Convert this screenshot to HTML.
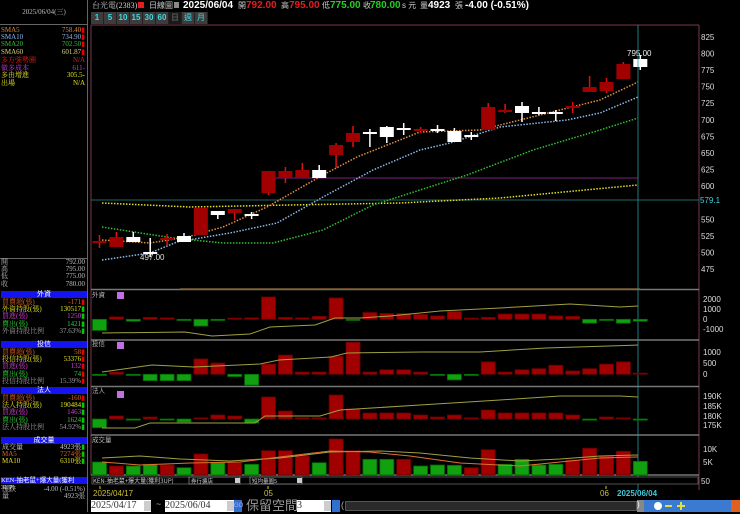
<!DOCTYPE html>
<html><head><meta charset="utf-8">
<style>
*{margin:0;padding:0;box-sizing:border-box}
body{width:740px;height:512px;background:#000;overflow:hidden;position:relative;font-family:"Liberation Sans","Noto Sans CJK TC",sans-serif;}
.l{position:absolute;font-size:7px;line-height:7px;white-space:nowrap;font-family:"Liberation Serif","Noto Serif CJK SC",serif}
.r{position:absolute;font-size:7px;line-height:7px;white-space:nowrap;text-align:right;right:655px;font-family:"Liberation Serif","Noto Serif CJK SC",serif}
.bar{position:absolute;left:1px;width:86px;height:7px;background:#1414f0;color:#fff;font-size:7px;line-height:7px;text-align:center;font-family:"Liberation Serif","Noto Sans CJK TC",serif}
.hd{position:absolute;top:0;font-size:9px;line-height:11px;white-space:nowrap;color:#ccc}
.b{font-weight:bold;font-size:10px}
.btn{position:absolute;top:12px;height:12px;width:13px;background:#3c3c3c;color:#40d8e0;font-size:8px;line-height:12px;text-align:center;font-weight:bold;border-right:1px solid #222}
</style></head><body>
<div style="position:absolute;left:0;top:0;width:88px;height:512px;border-right:1px solid #666"></div>
<div style="position:absolute;left:0;top:0;width:88px;height:25px;border-bottom:1px solid #666;color:#bbb;font-size:7px;text-align:center;line-height:25px;font-family:'Liberation Serif','Noto Serif CJK SC',serif">2025/06/04(三)</div>
<div class="l" style="left:1px;top:27px;color:#d88a3c">SMA5</div><div class="r" style="top:27px;color:#d88a3c">758.40<span style="color:#e00">▮</span></div>
<div class="l" style="left:1px;top:34px;color:#8ab8e8">SMA10</div><div class="r" style="top:34px;color:#8ab8e8">734.90<span style="color:#e00">▮</span></div>
<div class="l" style="left:1px;top:41px;color:#30c030">SMA20</div><div class="r" style="top:41px;color:#30c030">702.50<span style="color:#e00">▮</span></div>
<div class="l" style="left:1px;top:49px;color:#d8d080">SMA60</div><div class="r" style="top:49px;color:#d8d080">601.87<span style="color:#e00">▮</span></div>
<div class="l" style="left:1px;top:57px;color:#e02020">多方強勢圈</div><div class="r" style="top:57px;color:#e02020">N/A</div>
<div class="l" style="left:1px;top:65px;color:#c040d0">做多成本</div><div class="r" style="top:65px;color:#c040d0">611-</div>
<div class="l" style="left:1px;top:72px;color:#e0e020">多由增進</div><div class="r" style="top:72px;color:#e0e020">305.5-</div>
<div class="l" style="left:1px;top:80px;color:#e0e020">出場</div><div class="r" style="top:80px;color:#e0e020">N/A</div>
<div style="position:absolute;left:0;top:258px;width:88px;border-top:1px solid #666"></div>
<div class="l" style="left:1px;top:259px;color:#bbb">開</div><div class="r" style="top:259px;color:#bbb">792.00</div>
<div class="l" style="left:1px;top:266px;color:#bbb">高</div><div class="r" style="top:266px;color:#bbb">795.00</div>
<div class="l" style="left:1px;top:273px;color:#bbb">低</div><div class="r" style="top:273px;color:#bbb">775.00</div>
<div class="l" style="left:1px;top:281px;color:#bbb">收</div><div class="r" style="top:281px;color:#bbb">780.00</div>

<div class="bar" style="top:291px">外資</div>
<div class="l" style="left:2px;top:299px;color:#e06020">買賣超(張)</div><div class="r" style="top:299px;color:#e06020">-171<span style="color:#e00">▮</span></div>
<div class="l" style="left:2px;top:306px;color:#e0e020">外資持股(張)</div><div class="r" style="top:306px;color:#e0e020">130517<span style="color:#0c0">▮</span></div>
<div class="l" style="left:2px;top:313px;color:#d040d0">買進(張)</div><div class="r" style="top:313px;color:#d040d0">1250<span style="color:#0c0">▮</span></div>
<div class="l" style="left:2px;top:321px;color:#30d030">賣出(張)</div><div class="r" style="top:321px;color:#30d030">1421<span style="color:#0c0">▮</span></div>
<div class="l" style="left:2px;top:328px;color:#999">外資持股比例</div><div class="r" style="top:328px;color:#999">37.63%<span style="color:#0c0">▮</span></div>

<div class="bar" style="top:341px">投信</div>
<div class="l" style="left:2px;top:349px;color:#e06020">買賣超(張)</div><div class="r" style="top:349px;color:#e06020">58<span style="color:#e00">▮</span></div>
<div class="l" style="left:2px;top:356px;color:#e0e020">投信持股(張)</div><div class="r" style="top:356px;color:#e0e020">53376<span style="color:#e00">▮</span></div>
<div class="l" style="left:2px;top:363px;color:#d040d0">買進(張)</div><div class="r" style="top:363px;color:#d040d0">132<span style="color:#e00">▮</span></div>
<div class="l" style="left:2px;top:371px;color:#30d030">賣出(張)</div><div class="r" style="top:371px;color:#30d030">74<span style="color:#e00">▮</span></div>
<div class="l" style="left:2px;top:378px;color:#999">投信持股比例</div><div class="r" style="top:378px;color:#999">15.39%<span style="color:#e00">▮</span></div>

<div class="bar" style="top:387px">法人</div>
<div class="l" style="left:2px;top:395px;color:#e06020">買賣超(張)</div><div class="r" style="top:395px;color:#e06020">-160<span style="color:#e00">▮</span></div>
<div class="l" style="left:2px;top:402px;color:#e0e020">法人持股(張)</div><div class="r" style="top:402px;color:#e0e020">190484<span style="color:#0c0">▮</span></div>
<div class="l" style="left:2px;top:409px;color:#d040d0">買進(張)</div><div class="r" style="top:409px;color:#d040d0">1463<span style="color:#0c0">▮</span></div>
<div class="l" style="left:2px;top:417px;color:#30d030">賣出(張)</div><div class="r" style="top:417px;color:#30d030">1624<span style="color:#0c0">▮</span></div>
<div class="l" style="left:2px;top:424px;color:#999">法人持股比例</div><div class="r" style="top:424px;color:#999">54.92%<span style="color:#0c0">▮</span></div>

<div class="bar" style="top:437px">成交量</div>
<div class="l" style="left:2px;top:444px;color:#ccc">成交量</div><div class="r" style="top:444px;color:#ccc">4923張<span style="color:#0c0">▮</span></div>
<div class="l" style="left:2px;top:451px;color:#e06020">MA5</div><div class="r" style="top:451px;color:#e06020">7274張<span style="color:#0c0">▮</span></div>
<div class="l" style="left:2px;top:458px;color:#e0e020">MA10</div><div class="r" style="top:458px;color:#e0e020">6310張<span style="color:#0c0">▮</span></div>

<div class="bar" style="top:477px;text-align:left;font-size:6.5px">KEN-抽老鼠+爆大量(獲利3UP)</div>
<div class="l" style="left:2px;top:486px;color:#bbb">漲跌</div><div class="r" style="top:486px;color:#bbb">-4.00 (-0.51%)</div>
<div class="l" style="left:2px;top:493px;color:#bbb">量</div><div class="r" style="top:493px;color:#bbb">4923張</div>

<!-- header -->
<div class="hd" style="left:92px;font-family:'Liberation Serif','Noto Serif CJK SC',serif;font-size:8px">台光電(2383)</div>
<div style="position:absolute;left:138px;top:2px;width:6px;height:6px;background:#e02020"></div>
<div class="hd" style="left:149px;font-size:8px">日線圖</div>
<div style="position:absolute;left:174px;top:2px;width:5px;height:6px;background:#888"></div>
<div class="hd b" style="left:183px;color:#fff">2025/06/04</div>
<div class="hd" style="left:238px;font-size:8px">開</div><div class="hd b" style="left:246px;color:#e02020">792.00</div>
<div class="hd" style="left:281px;font-size:8px">高</div><div class="hd b" style="left:289px;color:#e02020">795.00</div>
<div class="hd" style="left:322px;font-size:8px">低</div><div class="hd b" style="left:330px;color:#20d020">775.00</div>
<div class="hd" style="left:363px;font-size:8px">收</div><div class="hd b" style="left:370px;color:#20d020">780.00</div>
<div class="hd" style="left:402px;font-size:8px">s 元</div>
<div class="hd" style="left:420px;font-size:8px">量</div><div class="hd b" style="left:428px;color:#fff">4923</div>
<div class="hd" style="left:455px;font-size:8px">張</div><div class="hd b" style="left:465px;color:#fff">-4.00 (-0.51%)</div>
<div class="btn" style="left:91px">1</div><div class="btn" style="left:104px">5</div><div class="btn" style="left:117px">10</div><div class="btn" style="left:130px">15</div><div class="btn" style="left:143px">30</div><div class="btn" style="left:156px">60</div>
<div class="btn" style="left:169px;background:#1a1a1a;color:#555">日</div><div class="btn" style="left:182px;font-weight:normal">週</div><div class="btn" style="left:195px;font-weight:normal">月</div>

<svg id="s" width="740" height="512" style="position:absolute;left:0;top:0" xmlns="http://www.w3.org/2000/svg"></svg>

<!-- bottom controls -->
<div style="position:absolute;left:91px;top:500px;width:60px;height:12px;background:#fff;color:#333;font-size:10px;line-height:12px;font-family:'Liberation Serif',serif">2025/04/17</div>
<div style="position:absolute;left:144px;top:501px;width:7px;height:10px;background:#ccc"></div>
<div style="position:absolute;left:156px;top:499px;color:#aaa;font-size:9px">~</div>
<div style="position:absolute;left:165px;top:500px;width:69px;height:12px;background:#fff;color:#333;font-size:10px;line-height:12px;font-family:'Liberation Serif',serif">2025/06/04</div>
<div style="position:absolute;left:227px;top:501px;width:7px;height:10px;background:#ccc"></div>
<div style="position:absolute;left:234px;top:500px;width:8px;height:12px;background:#3070d0;color:#aaf;font-size:6px;line-height:12px">GO</div>
<div style="position:absolute;left:246px;top:498px;color:#999;font-size:13px;line-height:14px;font-family:'Noto Sans CJK TC',sans-serif">保留空間</div>
<div style="position:absolute;left:297px;top:500px;width:34px;height:12px;background:#fff;color:#333;font-size:10px;line-height:12px;font-family:'Liberation Serif',serif">3</div>
<div style="position:absolute;left:324px;top:501px;width:7px;height:10px;background:#ccc"></div>
<div style="position:absolute;left:332px;top:500px;width:8px;height:12px;background:#3070d0"></div>
<div style="position:absolute;left:341px;top:500px;color:#aaa;font-size:9px">(</div>
<div style="position:absolute;left:345px;top:501px;width:292px;height:10px;background:#2a2a2a;border:1px solid #555"></div>
<div style="position:absolute;left:637px;top:500px;width:103px;height:12px;background:#3a7ad0"></div>
<div style="position:absolute;left:637px;top:500px;width:7px;height:12px;background:#888;color:#fff;font-size:8px">)</div>
<div style="position:absolute;left:654px;top:502px;width:8px;height:8px;border-radius:50%;background:#fff"></div>
<div style="position:absolute;left:665px;top:505px;width:7px;height:2px;background:#e0e040"></div>
<div style="position:absolute;left:677px;top:505px;width:8px;height:2px;background:#e0e040"></div>
<div style="position:absolute;left:680px;top:502px;width:2px;height:8px;background:#e0e040"></div>
<div style="position:absolute;left:731px;top:500px;width:9px;height:12px;background:#e06020"></div>

<script>
var s=document.getElementById('s'),h='';
function L(x1,y1,x2,y2,c,w,d){h+='<line x1="'+x1+'" y1="'+y1+'" x2="'+x2+'" y2="'+y2+'" stroke="'+c+'" stroke-width="'+(w||1)+'"'+(d?' stroke-dasharray="'+d+'"':'')+'/>';}
function R(x,y,w,hh,c,st){h+='<rect x="'+x+'" y="'+y+'" width="'+w+'" height="'+hh+'" fill="'+c+'"'+(st?' stroke="'+st+'" stroke-width="0.8"':'')+'/>';}
function T(x,y,t,c,sz,b){h+='<text x="'+x+'" y="'+y+'" fill="'+c+'" font-size="'+(sz||8)+'" font-family="Liberation Sans, sans-serif"'+(b?' font-weight="bold"':'')+'>'+t+'</text>';}
function P(pts,c,w,d){h+='<polyline points="'+pts+'" fill="none" stroke="'+c+'" stroke-width="'+(w||1)+'"'+(d?' stroke-dasharray="'+d+'"':'')+'/>';}
function X(i){return 99.5+16.9*i;}
L(91,25,699,25,'#7a3a4a');L(699,25,699,490,'#7a3a4a');L(91,25,91,475,'#7a3a4a');
[289.5,340,386.5,435,475].forEach(function(y){L(91,y,699,y,'#777',1.5);});
L(180,289,640,289,'#806030',1.5);
for(var p=825;p>=475;p-=25){if(p==575)continue;var y=70+(775-p)*0.664;T(701,y+3,p,'#ddd',8);}
L(91,200,699,200,'#2a8a8a',0.8);T(700,203,'579.1','#40d0e0',8);
L(262,178,638,178,'#7a207a',1);
var d='1.5 1.5';
P('102,203 190,207 290,205 400,203 500,198 638,185','#e0e020',1.5,d);
P('102,227 173,238 223,243 273,243 323,230 373,205 420,190 467,175 533,150 600,130 638,118','#30c030',1.5,d);
P('102,260 150,253 177,242 230,233 277,223 323,197 373,170 420,150 450,143 500,127 567,120 600,113 638,97','#8ab8e8',1.5,d);
P('102,240 150,243 187,237 223,227 267,207 323,175 357,157 420,132 480,130 540,115 600,100 638,82','#e09040',1.5,d);
var C=[[241,243,235,248,'r'],[237,247,232,247,'r'],[237,242,232,242,'w'],[252,254,238,257,'w'],[238,240,234,245,'r'],[236,242,233,242,'w'],[208,235,208,235,'r'],[211,215,211,219,'w'],[209,213,209,220,'r'],[214,216,212,219,'w'],[171,193,171,195,'r'],[171,178,167,183,'r'],[170,178,163,178,'r'],[170,178,165,178,'w'],[145,155,143,168,'r'],[133,142,126,147,'r'],[132,134,129,147,'w'],[127,137,126,143,'w'],[128,130,123,135,'w'],[129,131,127,133,'r'],[129,131,125,133,'w'],[131,142,128,142,'w'],[135,137,132,140,'w'],[107,130,103,130,'r'],[110,112,104,113,'r'],[106,113,102,122,'w'],[112,114,107,115,'w'],[112,114,110,121,'w'],[106,108,102,113,'r'],[87,92,76,92,'r'],[82,91,78,93,'r'],[64,79,62,79,'r'],[59,67,55,70,'w']];
C.forEach(function(c,i){var x=X(i),w=c[4]=='w';L(x,c[2],x,c[3],w?'#fff':'#e01010',1.5);R(x-7,c[0],14,Math.max(1.5,c[1]-c[0]),w?'#fff':'#a00000');});
T(627,56,'795.00','#eee',8);T(140,260,'497.00','#ddd',8);
L(638,25,638,490,'#2a9a9a',0.8);
function bars(arr,zero,sc){arr.forEach(function(v,i){var x=X(i)-7,hh=Math.abs(v*sc);if(hh<1.2)hh=1.2;if(v>=0)R(x,zero-hh,14,hh,'#a00000','#600');else R(x,zero,14,hh,'#10a010','#060');});}
bars([-1.15,.25,-.2,.2,.15,-.1,-.7,-.05,.1,.15,2.3,.2,.15,.3,2.2,-.1,.7,.6,.6,.5,.35,.8,.05,.2,.55,.55,.55,.35,.3,-.4,-.1,-.4,-.2],319.3,9.7);
P('102,333 185,332 212,336 250,334 270,327 315,325 335,318 360,318 390,316 440,311 500,308 570,304 620,307 638,306','#a0a040',1);
bars([-.02,.1,-.03,-.28,-.28,-.28,.68,.5,-.1,-.48,.45,.85,.1,.1,.8,1.42,.1,.2,.2,.1,-.03,-.25,-.02,.55,.1,.2,.25,.4,.15,.25,.45,.55,.05],374.3,22.6);
P('102,372 152,365 194,367 260,364 279,360 331,357 347,353 422,352 480,352 546,348 638,345','#a0a040',1);
bars([-8.7,3,-1,2,-1,-3,1,4,3,-4,22,8,1,1,24,10,6,6,6,4,2,4,1,9,6,6,6,6,4,-1,2,1,-1],419,1);
P('102,428 135,428 150,423 255,423 265,416 320,416 340,410 420,405 500,400 560,396 620,396 638,397','#a0a040',1);
var V=[[13,'g'],[9,'r'],[9,'g'],[10.7,'g'],[10,'r'],[7.3,'g'],[21,'r'],[12.3,'g'],[12.3,'r'],[10.7,'g'],[24.3,'r'],[24.3,'r'],[19,'r'],[12.3,'g'],[36,'r'],[24.3,'r'],[15.7,'g'],[15.7,'g'],[15.7,'r'],[9,'g'],[10,'g'],[9.7,'g'],[7.3,'r'],[25.3,'r'],[10.7,'g'],[15.7,'g'],[10,'g'],[10.7,'g'],[15,'r'],[26.7,'r'],[19,'r'],[23.7,'r'],[13.7,'g']];
V.forEach(function(v,i){R(X(i)-7,475-v[0],14,v[0],v[1]=='r'?'#a00000':'#10a010',v[1]=='r'?'#600':'#060');});
P('102,458 140,456 180,459 230,461 280,458 330,452 380,451 420,453 470,458 520,461 560,459 600,456 638,455','#a0a040',1);
P('102,462 140,465 190,463 240,462 280,457 330,451 370,452 410,456 460,463 520,466 560,462 600,458 638,457','#e07030',1);
[[92,297,'外資'],[92,346,'投信'],[92,393,'法人'],[92,442,'成交量']].forEach(function(a){h+='<text x="'+a[0]+'" y="'+a[1]+'" fill="#bbb" font-size="6.5" font-family="Noto Sans CJK TC, sans-serif">'+a[2]+'</text>';});
[292,342,391].forEach(function(y){R(117,y,7,7,'#c070e0');});
[[2000,302],[1000,312],[0,322],[-1000,332],[1000,355],[500,366],[0,377],['190K',399],['185K',409],['180K',419],['175K',428],['10K',452],['5K',465]].forEach(function(a){T(703,a[1],a[0],'#ddd',8);});
R(92,477,606,7,'#000','#666');
h+='<text x="93" y="483" fill="#ccc" font-size="6" font-family="Noto Sans CJK TC, sans-serif">KEN-抽老鼠+爆大量(獲利3UP)</text>';
R(189,477,51,7,'#000','#888');R(235,478,5,5,'#ccc');
h+='<text x="191" y="483" fill="#ccc" font-size="5.5" font-family="Noto Sans CJK TC, sans-serif">券行擴店</text>';
R(250,477,52,7,'#000','#888');R(297,478,5,5,'#ccc');
h+='<text x="252" y="483" fill="#ccc" font-size="5.5" font-family="Noto Sans CJK TC, sans-serif">短均量圖5</text>';
T(701,484,'50','#ddd',8);
L(100,486,100,489,'#cc4',1);L(268,486,268,489,'#cc4',1);L(606,486,606,489,'#cc4',1);
T(93,496,'2025/04/17','#d0c030',8);T(264,496,'05','#d0c030',8);T(600,496,'06','#d0c030',8);T(617,496,'2025/06/04','#40c8d8',8,true);
s.innerHTML=h;
</script>
</body></html>
